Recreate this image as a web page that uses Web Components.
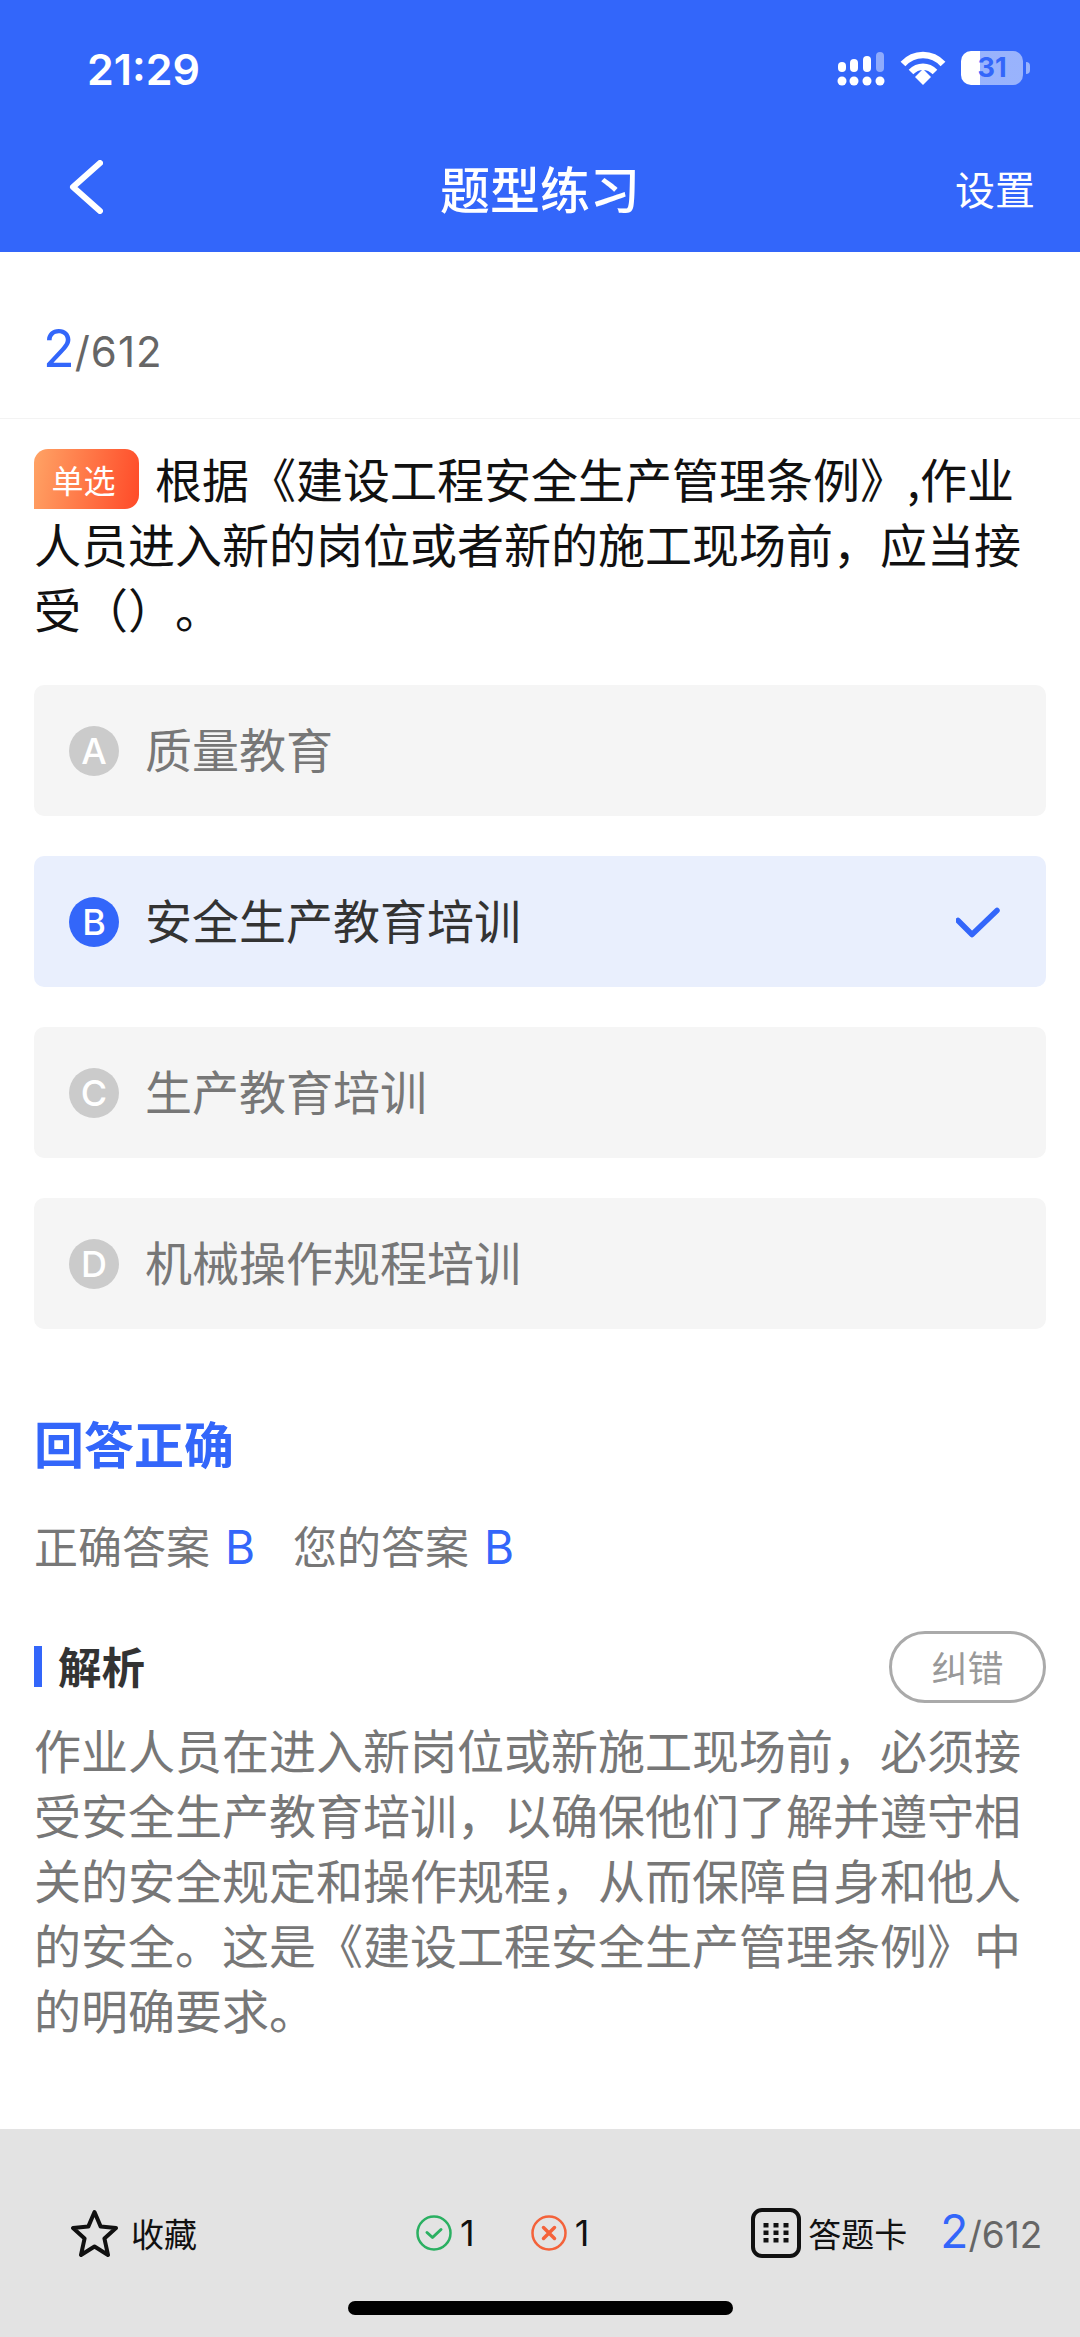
<!DOCTYPE html>
<html lang="zh">
<head>
<meta charset="utf-8">
<title>题型练习</title>
<style>
  html, body { margin: 0; padding: 0; background: #fff; }
  body { font-family: Inter, "Noto Sans CJK SC", sans-serif; width: 1080px; height: 2337px; overflow: hidden; }
  quiz-page { --blue: #3366fa; }
</style>
</head>
<body>
<quiz-page>
  <top-bar slot="top" page-title="题型练习" action="设置"></top-bar>
  <progress-row current="2" total="612"></progress-row>
  <question-text tag="单选">根据《建设工程安全生产管理条例》,作业人员进入新的岗位或者新的施工现场前，应当接受（）。</question-text>
  <option-list>
    <option-item letter="A">质量教育</option-item>
    <option-item letter="B" selected>安全生产教育培训</option-item>
    <option-item letter="C">生产教育培训</option-item>
    <option-item letter="D">机械操作规程培训</option-item>
  </option-list>
  <answer-result correct="B" mine="B">回答正确</answer-result>
  <analysis-block>作业人员在进入新岗位或新施工现场前，必须接受安全生产教育培训，以确保他们了解并遵守相关的安全规定和操作规程，从而保障自身和他人的安全。这是《建设工程安全生产管理条例》中的明确要求。</analysis-block>
  <bottom-bar slot="bottom" current="2" total="612"></bottom-bar>
</quiz-page>

<script>
class QuizPage extends HTMLElement {
  constructor() {
    super();
    this.attachShadow({mode: 'open'});
    this.shadowRoot.innerHTML = `
      <style>
        :host { display: flex; flex-direction: column; height: 2337px; }
        main { flex: 1; min-height: 0; }
      </style>
      <slot name="top"></slot>
      <main><slot></slot></main>
      <slot name="bottom"></slot>`;
  }
}

class TopBar extends HTMLElement {
  connectedCallback() {
    this.attachShadow({mode: 'open'});
    this.shadowRoot.innerHTML = `
      <style>
        :host { display: block; background: var(--blue); color: #fff; height: 252px; }
        .status { height: 132px; display: flex; align-items: flex-start; padding: 46px 0 0 87px; box-sizing: border-box; }
        .time { font: 600 43px/46px Inter, sans-serif; }
        .icons { margin-left: auto; display: flex; align-items: flex-start; margin-right: 50px; margin-top: 5px; }
        .signal { width: 48px; height: 36px; display: block; }
        .wifi { width: 46px; height: 34px; display: block; margin-left: 15px; }
        .battery { position: relative; width: 62px; height: 34px; margin-left: 15px; border-radius: 10px; overflow: hidden;
          background: linear-gradient(90deg, #fff 0 19px, rgba(255,255,255,.5) 19px); }
        .battery span { position: absolute; inset: 0; text-align: center; font: 700 27px/34px Inter, sans-serif; color: var(--blue); }
        .nub { width: 4px; height: 12px; margin: 11px 0 0 3px; background: rgba(255,255,255,.5); border-radius: 0 4px 4px 0; }
        .nav { height: 120px; display: grid; grid-template-columns: 1fr auto 1fr; align-items: center; padding: 0 46px; }
        .back { width: 34px; height: 54px; display: block; margin: -10px 0 0 23px; }
        h1 { margin: -10px 0 0; font: 500 50px/66px "Noto Sans CJK SC", sans-serif; }
        .action { justify-self: end; font: 400 40px/56px "Noto Sans CJK SC", sans-serif; margin: -8px -1px 0 0; }
      </style>
      <div class="status">
        <div class="time">21:29</div>
        <div class="icons">
          <svg class="signal" viewBox="0 0 48 36" fill="#fff">
            <rect x="1" y="11" width="8" height="10" rx="4"/><rect x="13" y="8" width="8" height="13" rx="4"/>
            <rect x="26" y="5" width="8" height="16" rx="4"/><rect x="39" y="1" width="8" height="20" rx="4" opacity=".45"/>
            <circle cx="5" cy="30" r="4.5"/><circle cx="17" cy="30" r="4.5"/><circle cx="30" cy="30" r="4.5"/><circle cx="43" cy="30" r="4.5"/>
          </svg>
          <svg class="wifi" viewBox="0 0 46 34" fill="none" stroke="#fff" stroke-width="6.5" stroke-linecap="butt">
            <path d="M3 13C14 1 32 1 43 13"/><path d="M11 21C18 14 28 14 35 21"/>
            <path d="M15 26L23 18L31 26L23 34Z" fill="#fff" stroke="none"/>
          </svg>
          <div class="battery"><span>31</span></div>
          <div class="nub"></div>
        </div>
      </div>
      <div class="nav">
        <svg class="back" viewBox="0 0 34 54" fill="none" stroke="#fff" stroke-width="6" stroke-linecap="round" stroke-linejoin="round"><path d="M31 3L4 27L31 51"/></svg>
        <h1>${this.getAttribute('page-title')}</h1>
        <div class="action">${this.getAttribute('action')}</div>
      </div>`;
  }
}

class ProgressRow extends HTMLElement {
  connectedCallback() {
    this.attachShadow({mode: 'open'});
    this.shadowRoot.innerHTML = `
      <style>
        :host { display: flex; align-items: baseline; height: 99px; padding: 67px 0 0 43px; border-bottom: 1px solid #f3f3f3; }
        .cur { font: 400 52px/60px Inter, sans-serif; color: var(--blue); }
        .tot { font: 400 42px/60px Inter, sans-serif; letter-spacing: 1px; color: #666; }
      </style>
      <span class="cur">${this.getAttribute('current')}</span><span class="tot">/${this.getAttribute('total')}</span>`;
  }
}

class QuestionText extends HTMLElement {
  connectedCallback() {
    this.attachShadow({mode: 'open'});
    this.shadowRoot.innerHTML = `
      <style>
        :host { display: block; padding: 26px 34px 0; font: 400 47px/65px "Noto Sans CJK SC", sans-serif; color: #111; text-spacing-trim: space-all; }
        .tag { display: inline-block; width: 99px; height: 60px; padding-right: 6px; margin-right: 16px; vertical-align: 5px; text-align: center;
          font: 400 32px/60px "Noto Sans CJK SC", sans-serif; color: #fff; border-radius: 14px 14px 14px 0;
          background: linear-gradient(100deg, #ffa365, #ff4a28); }
      </style>
      <span class="tag">${this.getAttribute('tag')}</span><slot></slot>`;
  }
}

class OptionList extends HTMLElement {
  constructor() {
    super();
    this.attachShadow({mode: 'open'});
    this.shadowRoot.innerHTML = `
      <style>:host { display: flex; flex-direction: column; gap: 40px; margin: 45px 34px 0; }</style>
      <slot></slot>`;
  }
}

class OptionItem extends HTMLElement {
  connectedCallback() {
    const selected = this.hasAttribute('selected');
    this.attachShadow({mode: 'open'});
    this.shadowRoot.innerHTML = `
      <style>
        :host { display: flex; align-items: center; height: 131px; padding: 0 46px 0 35px; border-radius: 10px;
          background: ${selected ? '#e9effd' : '#f5f5f5'}; color: ${selected ? '#333' : '#777'};
          font: 400 47px/60px "Noto Sans CJK SC", sans-serif; }
        .letter { width: 50px; height: 50px; border-radius: 50%; margin-right: 26px; color: #fff; text-align: center;
          font: 500 36px/50px Inter, sans-serif; background: ${selected ? 'var(--blue)' : '#cbcbcb'}; }
        .label { margin-top: -5px; }
        svg { margin-left: auto; width: 44px; height: 34px; }
      </style>
      <div class="letter">${this.getAttribute('letter')}</div>
      <div class="label"><slot></slot></div>
      ${selected ? '<svg viewBox="0 0 44 34" fill="none" stroke="#3366fa" stroke-width="5.5" stroke-linecap="round" stroke-linejoin="round"><path d="M2 15.500L16 29.500L41 5.500"/></svg>' : ''}`;
  }
}

class AnswerResult extends HTMLElement {
  connectedCallback() {
    this.attachShadow({mode: 'open'});
    this.shadowRoot.innerHTML = `
      <style>
        :host { display: block; margin: 80px 34px 0; }
        h2 { margin: 0; font: 700 50px/66px "Noto Sans CJK SC", sans-serif; color: var(--blue); }
        p { margin: 40px 0 0; font: 400 44px/60px "Noto Sans CJK SC", sans-serif; color: #777; display: flex; }
        b { font: 400 46px/60px Inter, sans-serif; color: var(--blue); margin-left: 15px; }
        span + span { margin-left: 38px; }
      </style>
      <h2><slot></slot></h2>
      <p><span>正确答案<b>${this.getAttribute('correct')}</b></span><span>您的答案<b>${this.getAttribute('mine')}</b></span></p>`;
  }
}

class AnalysisBlock extends HTMLElement {
  constructor() {
    super();
    this.attachShadow({mode: 'open'});
    this.shadowRoot.innerHTML = `
      <style>
        :host { display: block; margin: 54px 34px 0; }
        .head { display: flex; align-items: center; height: 71px; }
        .bar { width: 8px; height: 41px; background: var(--blue); margin-right: 16px; }
        h3 { margin: -2px 0 0; font: 700 43.5px/60px "Noto Sans CJK SC", sans-serif; color: #333; }
        .fix { margin-left: auto; width: 151px; height: 66px; border: 3px solid #aaa; border-radius: 36px; text-align: center;
          font: 400 36px/64px "Noto Sans CJK SC", sans-serif; color: #999; }
        .body { margin-top: 14px; font: 400 47px/65px "Noto Sans CJK SC", sans-serif; color: #777; text-spacing-trim: space-all; }
      </style>
      <div class="head"><span class="bar"></span><h3>解析</h3><span class="fix">纠错</span></div>
      <div class="body"><slot></slot></div>`;
  }
}

class BottomBar extends HTMLElement {
  connectedCallback() {
    this.attachShadow({mode: 'open'});
    this.shadowRoot.innerHTML = `
      <style>
        :host { display: block; flex: none; height: 208px; background: #e3e3e3; color: #111; }
        .row { display: flex; align-items: center; height: 50px; padding: 79px 0 0 71px; }
        svg { display: block; flex: none; }
        .txt { font: 400 33px/44px "Noto Sans CJK SC", sans-serif; }
        .num { font: 400 36px/44px Inter, sans-serif; }
        .cur { font: 400 46px/50px Inter, sans-serif; color: var(--blue); }
        .tot { font: 400 37px/50px Inter, sans-serif; color: #666; }
        .pg { display: flex; align-items: baseline; margin-left: 33px; }
        .home { width: 385px; height: 14px; margin: 43px auto 0; background: #000; border-radius: 7px; }
      </style>
      <div class="row">
        <svg width="47" height="48" viewBox="0 0 47 48" fill="none" stroke="#111" stroke-width="4" stroke-linejoin="round"><path d="M23.5 3L29.7 17.6L45 19L33.4 29.4L37 46L23.5 37.5L10 46L13.6 29.4L2 19L17.3 17.6Z"/></svg>
        <span class="txt" style="margin-left:13px">收藏</span>
        <svg style="margin-left:219px" width="36" height="36" viewBox="0 0 36 36" fill="none" stroke="#2bb062" stroke-width="2.500" stroke-linecap="round" stroke-linejoin="round"><circle cx="18" cy="18" r="16.500"/><path d="M11 17.500L16.500 22.500L25 14.500" stroke-width="3"/></svg>
        <span class="num" style="margin-left:8px">1</span>
        <svg style="margin-left:56px" width="36" height="36" viewBox="0 0 36 36" fill="none" stroke="#f4623a" stroke-width="2.500" stroke-linecap="round"><circle cx="18" cy="18" r="16.500"/><path d="M12.500 12.500L23.500 23.500M23.500 12.500L12.500 23.500" stroke-width="3.500"/></svg>
        <span class="num" style="margin-left:8px">1</span>
        <svg style="margin-left:162px" width="50" height="50" viewBox="0 0 50 50" fill="none" stroke="#111" stroke-width="4"><rect x="2" y="2" width="46" height="46" rx="9"/><g fill="#111" stroke="none"><rect x="12.500" y="15" width="5" height="4.500"/><rect x="22.500" y="15" width="5" height="4.500"/><rect x="32.500" y="15" width="5" height="4.500"/><rect x="12.500" y="22.500" width="5" height="4.500"/><rect x="22.500" y="22.500" width="5" height="4.500"/><rect x="32.500" y="22.500" width="5" height="4.500"/><rect x="12.500" y="30" width="5" height="4.500"/><rect x="22.500" y="30" width="5" height="4.500"/><rect x="32.500" y="30" width="5" height="4.500"/></g></svg>
        <span class="txt" style="margin-left:7px">答题卡</span>
        <span class="pg"><span class="cur">${this.getAttribute('current')}</span><span class="tot">/${this.getAttribute('total')}</span></span>
      </div>
      <div class="home"></div>`;
  }
}

customElements.define('quiz-page', QuizPage);
customElements.define('top-bar', TopBar);
customElements.define('progress-row', ProgressRow);
customElements.define('question-text', QuestionText);
customElements.define('option-list', OptionList);
customElements.define('option-item', OptionItem);
customElements.define('answer-result', AnswerResult);
customElements.define('analysis-block', AnalysisBlock);
customElements.define('bottom-bar', BottomBar);
</script>
</body>
</html>
